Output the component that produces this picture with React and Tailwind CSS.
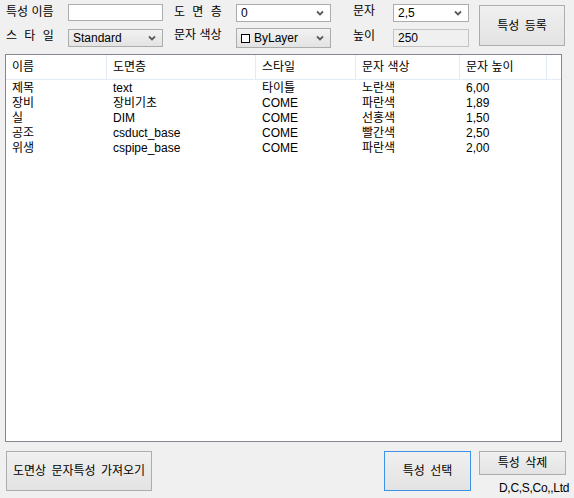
import React from "react";

const rows = [
  ["제목", "text", "타이틀", "노란색", "6,00"],
  ["장비", "장비기초", "COME", "파란색", "1,89"],
  ["실", "DIM", "COME", "선홍색", "1,50"],
  ["공조", "csduct_base", "COME", "빨간색", "2,50"],
  ["위생", "cspipe_base", "COME", "파란색", "2,00"],
];

const cols = [
  { label: "이름", w: "w-[101px]" },
  { label: "도면층", w: "w-[149px]" },
  { label: "스타일", w: "w-[100px]" },
  { label: "문자 색상", w: "w-[104px]" },
  { label: "문자 높이", w: "w-[87px]" },
];

const Chevron = () => (
  <svg width="8" height="6" viewBox="0 0 8 6" className="absolute right-[6px] top-1/2 -translate-y-1/2">
    <path d="M1 1.5 L4 4.5 L7 1.5" fill="none" stroke="#5a5a5a" strokeWidth="1.8" />
  </svg>
);

const Select = ({ children, gray }) => (
  <div
    className={`relative h-[18px] border border-[#acacac] flex items-center pl-[4px] ${
      gray ? "bg-gradient-to-b from-[#f2f2f2] to-[#e3e3e3]" : "bg-white"
    }`}
  >
    {children}
    <Chevron />
  </div>
);

const Button = ({ children, className }) => (
  <button
    className={`border bg-gradient-to-b from-[#f0f0f0] to-[#e3e3e3] flex items-center justify-center text-[12px] text-black [word-spacing:2px] ${className}`}
  >
    {children}
  </button>
);

const App = () => {
  return (
    <div className="w-[574px] h-[498px] bg-[#f0f0f0] text-[12px] leading-[14px] text-black font-['Liberation_Sans','Noto_Sans_CJK_KR',sans-serif] overflow-hidden">
      {/* 상단 입력 영역 */}
      <div className="flex h-[54px] pt-[4px]">
        <div className="w-[68px] pl-[6px] flex flex-col">
          <div className="h-[18px] pt-[1px]">특성 이름</div>
          <div className="h-[18px] mt-[7px] [word-spacing:4px]">스 타 일</div>
        </div>
        <div className="w-[95px] flex flex-col">
          <div className="h-[17px] border border-[#abadb3] bg-white" />
          <div className="mt-[8px]">
            <Select gray>Standard</Select>
          </div>
        </div>
        <div className="w-[62px] ml-[11px] flex flex-col">
          <div className="h-[18px] pt-[1px] [word-spacing:4px]">도 면 층</div>
          <div className="h-[18px] mt-[6px]">문자 색상</div>
        </div>
        <div className="w-[95px] flex flex-col">
          <Select>0</Select>
          <div className="mt-[6px]">
            <div className="relative h-[20px] border border-[#acacac] bg-gradient-to-b from-[#f2f2f2] to-[#e3e3e3] flex items-center pl-[4px]">
              <span className="w-[9px] h-[9px] border border-black bg-white mr-[4px]" />
              ByLayer
              <Chevron />
            </div>
          </div>
        </div>
        <div className="w-[40px] ml-[22px] flex flex-col">
          <div className="h-[18px]">문자</div>
          <div className="h-[18px] mt-[7px]">높이</div>
        </div>
        <div className="w-[76px] flex flex-col">
          <Select>2,5</Select>
          <div className="h-[18px] mt-[7px] border border-[#c4c4c4] bg-[#f0f0f0] flex items-center pl-[4px]">
            250
          </div>
        </div>
        <Button className="ml-[10px] mt-[1px] w-[86px] h-[41px] border-[#adadad]">특성 등록</Button>
      </div>

      {/* 목록 */}
      <div className="ml-[5px] w-[557px] h-[388px] border border-[#828790] bg-white">
        <div className="flex h-[25px] border-b border-[#e3ecf6]">
          {cols.map((c) => (
            <div
              key={c.label}
              className={`${c.w} border-r border-[#e3ecf6] pl-[6px] flex items-center`}
            >
              {c.label}
            </div>
          ))}
        </div>
        <div>
          {rows.map((r) => (
            <div key={r[0]} className="flex h-[15px] items-center">
              {r.map((v, i) => (
                <div key={i} className={`${cols[i].w} pl-[6px]`}>
                  {v}
                </div>
              ))}
            </div>
          ))}
        </div>
      </div>

      {/* 하단 버튼 */}
      <div className="flex mt-[9px]">
        <Button className="ml-[6px] w-[146px] h-[40px] border-[#adadad]">도면상 문자특성 가져오기</Button>
        <Button className="ml-[232px] w-[87px] h-[40px] border-[#3c93e6]">특성 선택</Button>
        <div className="ml-[8px] w-[87px] flex flex-col">
          <Button className="w-[87px] h-[24px] border-[#adadad]">특성 삭제</Button>
          <div className="mt-[6px] pl-[20px] whitespace-nowrap tracking-[-0.3px]">D,C,S,Co,,Ltd</div>
        </div>
      </div>
    </div>
  );
};

export default App;
